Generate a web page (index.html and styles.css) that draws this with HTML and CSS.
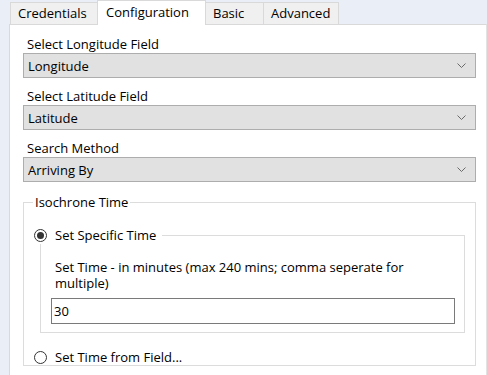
FILE: index.html
```html
<!DOCTYPE html>
<html lang="en">
<head>
    <meta charset="UTF-8">
    <title>Isochrone Configuration</title>
    <link rel="stylesheet" href="styles.css">
</head>
<body>
    <div class="window">
        <div class="tabs">
            <div class="tab tab-credentials">Credentials</div>
            <div class="tab tab-config active">Configuration</div>
            <div class="tab tab-basic">Basic</div>
            <div class="tab tab-advanced">Advanced</div>
        </div>

        <div class="panel">
            <div class="field">
                <div class="label">Select Longitude Field</div>
                <div class="select">
                    <span>Longitude</span>
                    <svg class="chevron" width="9" height="5" viewBox="0 0 9 5"><polyline points="0.5,0.5 4.5,4.5 8.5,0.5" fill="none" stroke="#6a6a6a" stroke-width="1"/></svg>
                </div>
            </div>
            <div class="field">
                <div class="label">Select Latitude Field</div>
                <div class="select">
                    <span>Latitude</span>
                    <svg class="chevron" width="9" height="5" viewBox="0 0 9 5"><polyline points="0.5,0.5 4.5,4.5 8.5,0.5" fill="none" stroke="#6a6a6a" stroke-width="1"/></svg>
                </div>
            </div>
            <div class="field">
                <div class="label">Search Method</div>
                <div class="select">
                    <span>Arriving By</span>
                    <svg class="chevron" width="9" height="5" viewBox="0 0 9 5"><polyline points="0.5,0.5 4.5,4.5 8.5,0.5" fill="none" stroke="#6a6a6a" stroke-width="1"/></svg>
                </div>
            </div>

            <fieldset class="group">
                <legend>Isochrone Time</legend>

                <fieldset class="subgroup">
                    <legend><span class="radio checked"></span>Set Specific Time</legend>
                    <div class="hint">Set Time - in minutes (max 240 mins; comma seperate for multiple)</div>
                    <div class="textbox">30</div>
                </fieldset>

                <div class="option"><span class="radio"></span>Set Time from Field...</div>
            </fieldset>
        </div>
    </div>
</body>
</html>
```

FILE: styles.css
```css
body {
    margin: 0;
    background-color: #eaeef7;
    font-family: "Open Sans", "Noto Sans", sans-serif;
    font-size: 13px;
    color: #000;
}
.window {
    padding-left: 9px;
    height: 375px;
    overflow: hidden;
}
/* Tab strip */
.tabs {
    display: flex;
    align-items: flex-end;
    height: 24px;
    padding-left: 1px;
}
.tab {
    box-sizing: border-box;
    height: 22px;
    line-height: 20px;
    padding: 0 0 0 7px;
    background-color: #f0f0f0;
    border: 1px solid #d9d9d9;
    border-bottom: none;
    margin-right: -1px;
}
.tab-credentials { width: 88px; }
.tab-config { width: 109px; }
.tab-basic { width: 59px; }
.tab-advanced { width: 76px; }
.tab.active {
    height: 25px;
    line-height: 22px;
    background-color: #fff;
    margin-bottom: -1px;
    padding-left: 8px;
    position: relative;
    z-index: 1;
}
/* Panel */
.panel {
    background-color: #fff;
    border: 1px solid #d9d9d9;
    border-right-color: #e3e3e3;
    padding: 11px 10px 0 13px;
    height: 400px;
}
.field {
    margin-bottom: 10px;
}
.label {
    line-height: 16px;
    margin: 0 0 1px 4px;
}
.select {
    display: flex;
    align-items: center;
    justify-content: space-between;
    height: 23px;
    padding: 0 9px 0 4px;
    background-color: #e1e1e1;
    border: 1px solid #adadad;
}
.chevron {
    display: block;
}
/* Group boxes */
.group {
    margin: 12px 0 0 0;
    padding: 6px 10px 0 10px;
    border: 1px solid #dcdcdc;
}
.group > legend {
    padding: 0 2px;
    margin-left: -1px;
    line-height: 16px;
}
.subgroup {
    margin: 10px 0 0 6px;
    padding: 15px 9px 8px 10px;
    border: 1px solid #dcdcdc;
}
.subgroup > legend {
    display: flex;
    align-items: center;
    margin-left: -17px;
    padding: 0 6px 0 0;
    line-height: 18px;
    background-color: #fff;
}
.radio {
    display: inline-block;
    box-sizing: border-box;
    width: 13px;
    height: 13px;
    border: 1px solid #333;
    border-radius: 50%;
    margin-right: 8px;
    position: relative;
}
.radio.checked::after {
    content: "";
    position: absolute;
    left: 2px;
    top: 2px;
    width: 7px;
    height: 7px;
    border-radius: 50%;
    background-color: #333;
}
.hint {
    line-height: 16px;
    margin: 0 0 7px 4px;
}
.textbox {
    height: 24px;
    line-height: 24px;
    padding-left: 2px;
    border: 1px solid #7a7a7a;
}
.option {
    display: flex;
    align-items: center;
    margin-top: 16px;
    line-height: 16px;
}
```
